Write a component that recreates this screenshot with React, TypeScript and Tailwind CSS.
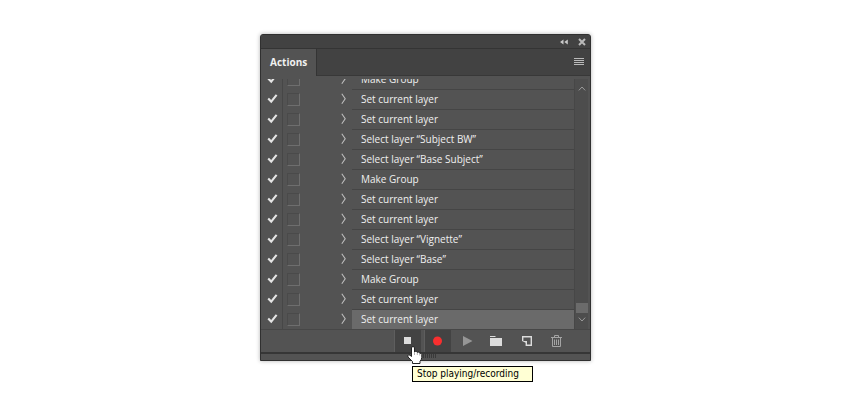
import { useState } from "react";
import type { ReactNode } from "react";

const STEPS: string[] = [
  "Make Group",
  "Set current layer",
  "Set current layer",
  "Select layer “Subject BW”",
  "Select layer “Base Subject”",
  "Make Group",
  "Set current layer",
  "Set current layer",
  "Select layer “Vignette”",
  "Select layer “Base”",
  "Make Group",
  "Set current layer",
  "Set current layer",
];

function StepRow({ name, selected, onSelect }: { name: string; selected: boolean; onSelect: () => void }) {
  return (
    <li className="flex h-5 shrink-0 items-stretch">
      <label className="grid w-[22px] shrink-0 place-items-center border-r border-[#474747]">
        <input
          type="checkbox"
          defaultChecked
          aria-label={`Include ${name}`}
          className="peer col-start-1 row-start-1 size-3 appearance-none"
        />
        <svg
          viewBox="0 0 12 12"
          className="invisible col-start-1 row-start-1 size-3 peer-checked:visible"
          fill="none"
          stroke="#e4e4e4"
          strokeWidth="2.1"
        >
          <path d="M2.2 5.6 5.2 8.6 10.6 1.8" />
        </svg>
      </label>
      <div className="flex w-[51px] shrink-0 items-center pl-1">
        <input
          type="checkbox"
          aria-label={`Show dialog for ${name}`}
          className="size-[13px] appearance-none border border-t-[#4a4a4a] border-r-[#6e6e6e] border-b-[#6e6e6e] border-l-[#4a4a4a]"
        />
      </div>
      <button type="button" aria-label={`Expand ${name}`} className="grid w-[18px] shrink-0 place-items-center">
        <svg viewBox="0 0 6 12" className="h-3 w-1.5" fill="none" stroke="#bdbdbd" strokeWidth="1.1">
          <path d="M1.8 .8 5.2 5.800 1.800 10.800" />
        </svg>
      </button>
      <button
        type="button"
        onClick={onSelect}
        className={`min-w-0 flex-1 truncate border-t border-[#454545] pb-0.5 pl-[9px] text-left text-[10px] leading-4 text-[#f0f0f0] ${
          selected ? "bg-[#6a6a6a]" : ""
        }`}
      >
        {name}
      </button>
    </li>
  );
}

function ToolButton({ label, active, children }: { label: string; active?: boolean; children: ReactNode }) {
  return (
    <button
      type="button"
      aria-label={label}
      className={`grid w-[27px] place-items-center border-l ${
        active ? "border-[#5e5e5e] bg-[#434343]" : "border-transparent"
      }`}
    >
      {children}
    </button>
  );
}

export default function App() {
  const [selected, setSelected] = useState(STEPS.length - 1);

  return (
    <main className="min-h-screen bg-white pt-[34px] pl-px font-['Open_Sans','Noto_Sans',sans-serif]">
      <section className="relative mx-auto w-full max-w-[331px] rounded-t-[3px] border border-[#303030] bg-[#535353] shadow-[0_0_4px_rgba(0,0,0,0.3)]">
        <header className="flex h-[13px] items-center justify-end gap-2.5 rounded-t-[2px] bg-[#424242] pr-1">
          <button type="button" aria-label="Collapse to icons">
            <svg viewBox="0 0 8 6" className="h-1.5 w-2" fill="#c9c9c9">
              <path d="M3.5 .5v5L0 3zM7.800 .5v5L4.300 3z" />
            </svg>
          </button>
          <button type="button" aria-label="Close panel">
            <svg viewBox="0 0 8 8" className="size-2" fill="none" stroke="#b9b9b9" strokeWidth="2">
              <path d="M1 1l6 6M7 1 1 7" />
            </svg>
          </button>
        </header>

        <div className="flex h-7 items-stretch border-t border-[#343434] bg-[#424242]">
          <button
            type="button"
            className="border-r border-[#343434] bg-[#535353] px-[9px] text-[10px] font-bold text-[#f0f0f0]"
          >
            Actions
          </button>
          <div className="flex flex-1 items-center justify-end border-b border-[#383838] pr-1.5">
            <button type="button" aria-label="Panel menu">
              <svg viewBox="0 0 10 8" className="h-2 w-2.5" fill="#bababa">
                <path d="M0 0h10v1H0zM0 2h10v1H0zM0 4h10v1H0zM0 6h10v1H0z" />
              </svg>
            </button>
          </div>
        </div>

        <div className="mt-[3px] flex h-[250px]">
          <ul className="flex min-w-0 flex-1 flex-col justify-end overflow-hidden">
            {STEPS.map((name, i) => (
              <StepRow key={i} name={name} selected={i === selected} onSelect={() => setSelected(i)} />
            ))}
          </ul>
          <div className="mr-0.5 flex w-3.5 flex-col items-center border-l border-[#474747] bg-[#4d4d4d] py-[7px]">
            <button type="button" aria-label="Scroll up">
              <svg viewBox="0 0 8 5" className="h-[5px] w-2" fill="none" stroke="#9a9a9a">
                <path d="M.8 4.4 4 1l3.2 3.4" />
              </svg>
            </button>
            <div className="mt-auto mb-1 h-2.5 w-3 bg-[#6b6b6b]" />
            <button type="button" aria-label="Scroll down">
              <svg viewBox="0 0 8 5" className="h-[5px] w-2" fill="none" stroke="#9a9a9a">
                <path d="M.8.6 4 4 7.2.6" />
              </svg>
            </button>
          </div>
        </div>

        <div className="flex h-[25px] items-stretch justify-end gap-[3px] border-t border-b-2 border-t-[#474747] border-b-[#363636] pr-[19px]">
          <ToolButton label="Stop playing/recording" active>
            <svg viewBox="0 0 8 8" className="size-2" fill="#dcdcdc">
              <path d="M0 0h7v7H0z" />
            </svg>
          </ToolButton>
          <ToolButton label="Begin recording" active>
            <svg viewBox="0 0 10 10" className="size-2.5">
              <circle cx="4.5" cy="5" r="4.5" fill="#f92f2f" />
            </svg>
          </ToolButton>
          <ToolButton label="Play selection">
            <svg viewBox="0 0 10 10" className="size-2.5" fill="#969696">
              <path d="M0 0 9.5 5 0 10z" />
            </svg>
          </ToolButton>
          <ToolButton label="Create new set">
            <svg viewBox="0 0 16 10" className="h-2.5 w-4" fill="#dcdcdc">
              <path d="M0 0h5l1 1H0zM0 2h12v8H0z" />
            </svg>
          </ToolButton>
          <ToolButton label="Create new action">
            <svg viewBox="0 0 12 10" className="h-2.5 w-3" fill="none" stroke="#dcdcdc">
              <path strokeWidth="1.4" d="M.7 5V.7h8.600v8.600H5" />
              <path fill="#dcdcdc" stroke="none" d="M0 5h5v5H3.600V6.800z" />
            </svg>
          </ToolButton>
          <ToolButton label="Delete">
            <svg viewBox="0 0 14 12" className="h-3 w-3.5" fill="none" stroke="#a4a4a4">
              <path d="M0 2.5h11M3.5 2V.5h4V2M1.5 3v8.5h8V3M3.5 4.5v5.5M5.5 4.5v5.5M7.5 4.5v5.5" />
            </svg>
          </ToolButton>
        </div>

        <footer className="flex h-1.5 items-start justify-center" aria-hidden="true">
          <svg viewBox="0 0 22 4" className="h-1 w-[22px]" stroke="#3a3a3a" strokeWidth="4" strokeDasharray="1 1">
            <path d="M0 2h22" />
          </svg>
        </footer>

        <div
          role="tooltip"
          className="absolute top-[331px] left-[151px] border border-black bg-[#ffffd4] pr-[13px] pl-1 font-['DejaVu_Sans_Condensed','DejaVu_Sans',sans-serif] text-[10px] leading-[14px] whitespace-nowrap text-black"
        >
          Stop playing/recording
        </div>
        <svg
          viewBox="0 0 16 18"
          className="absolute top-[311px] left-[146px] h-[18px] w-4"
          fill="#fff"
          stroke="#222"
          strokeLinejoin="round"
        >
          <path d="M4.500 10V2Q4.500.5 6 .5T7.500 2V6Q8 5 9.200 5.300T10.300 6.500Q11 5.700 12 6.200T12.800 7.300Q14.500 6.800 14.800 8.500V11.500Q14.500 14 13 15.200V17.500H5.500V15.500L1 11Q.3 9.500 1.500 9T4.500 10.500Z" />
          <path fill="none" stroke="#777" strokeWidth=".6" d="M7.500 6V9M10.300 6.500V9M12.800 7.500V9.500" />
        </svg>
      </section>
    </main>
  );
}
